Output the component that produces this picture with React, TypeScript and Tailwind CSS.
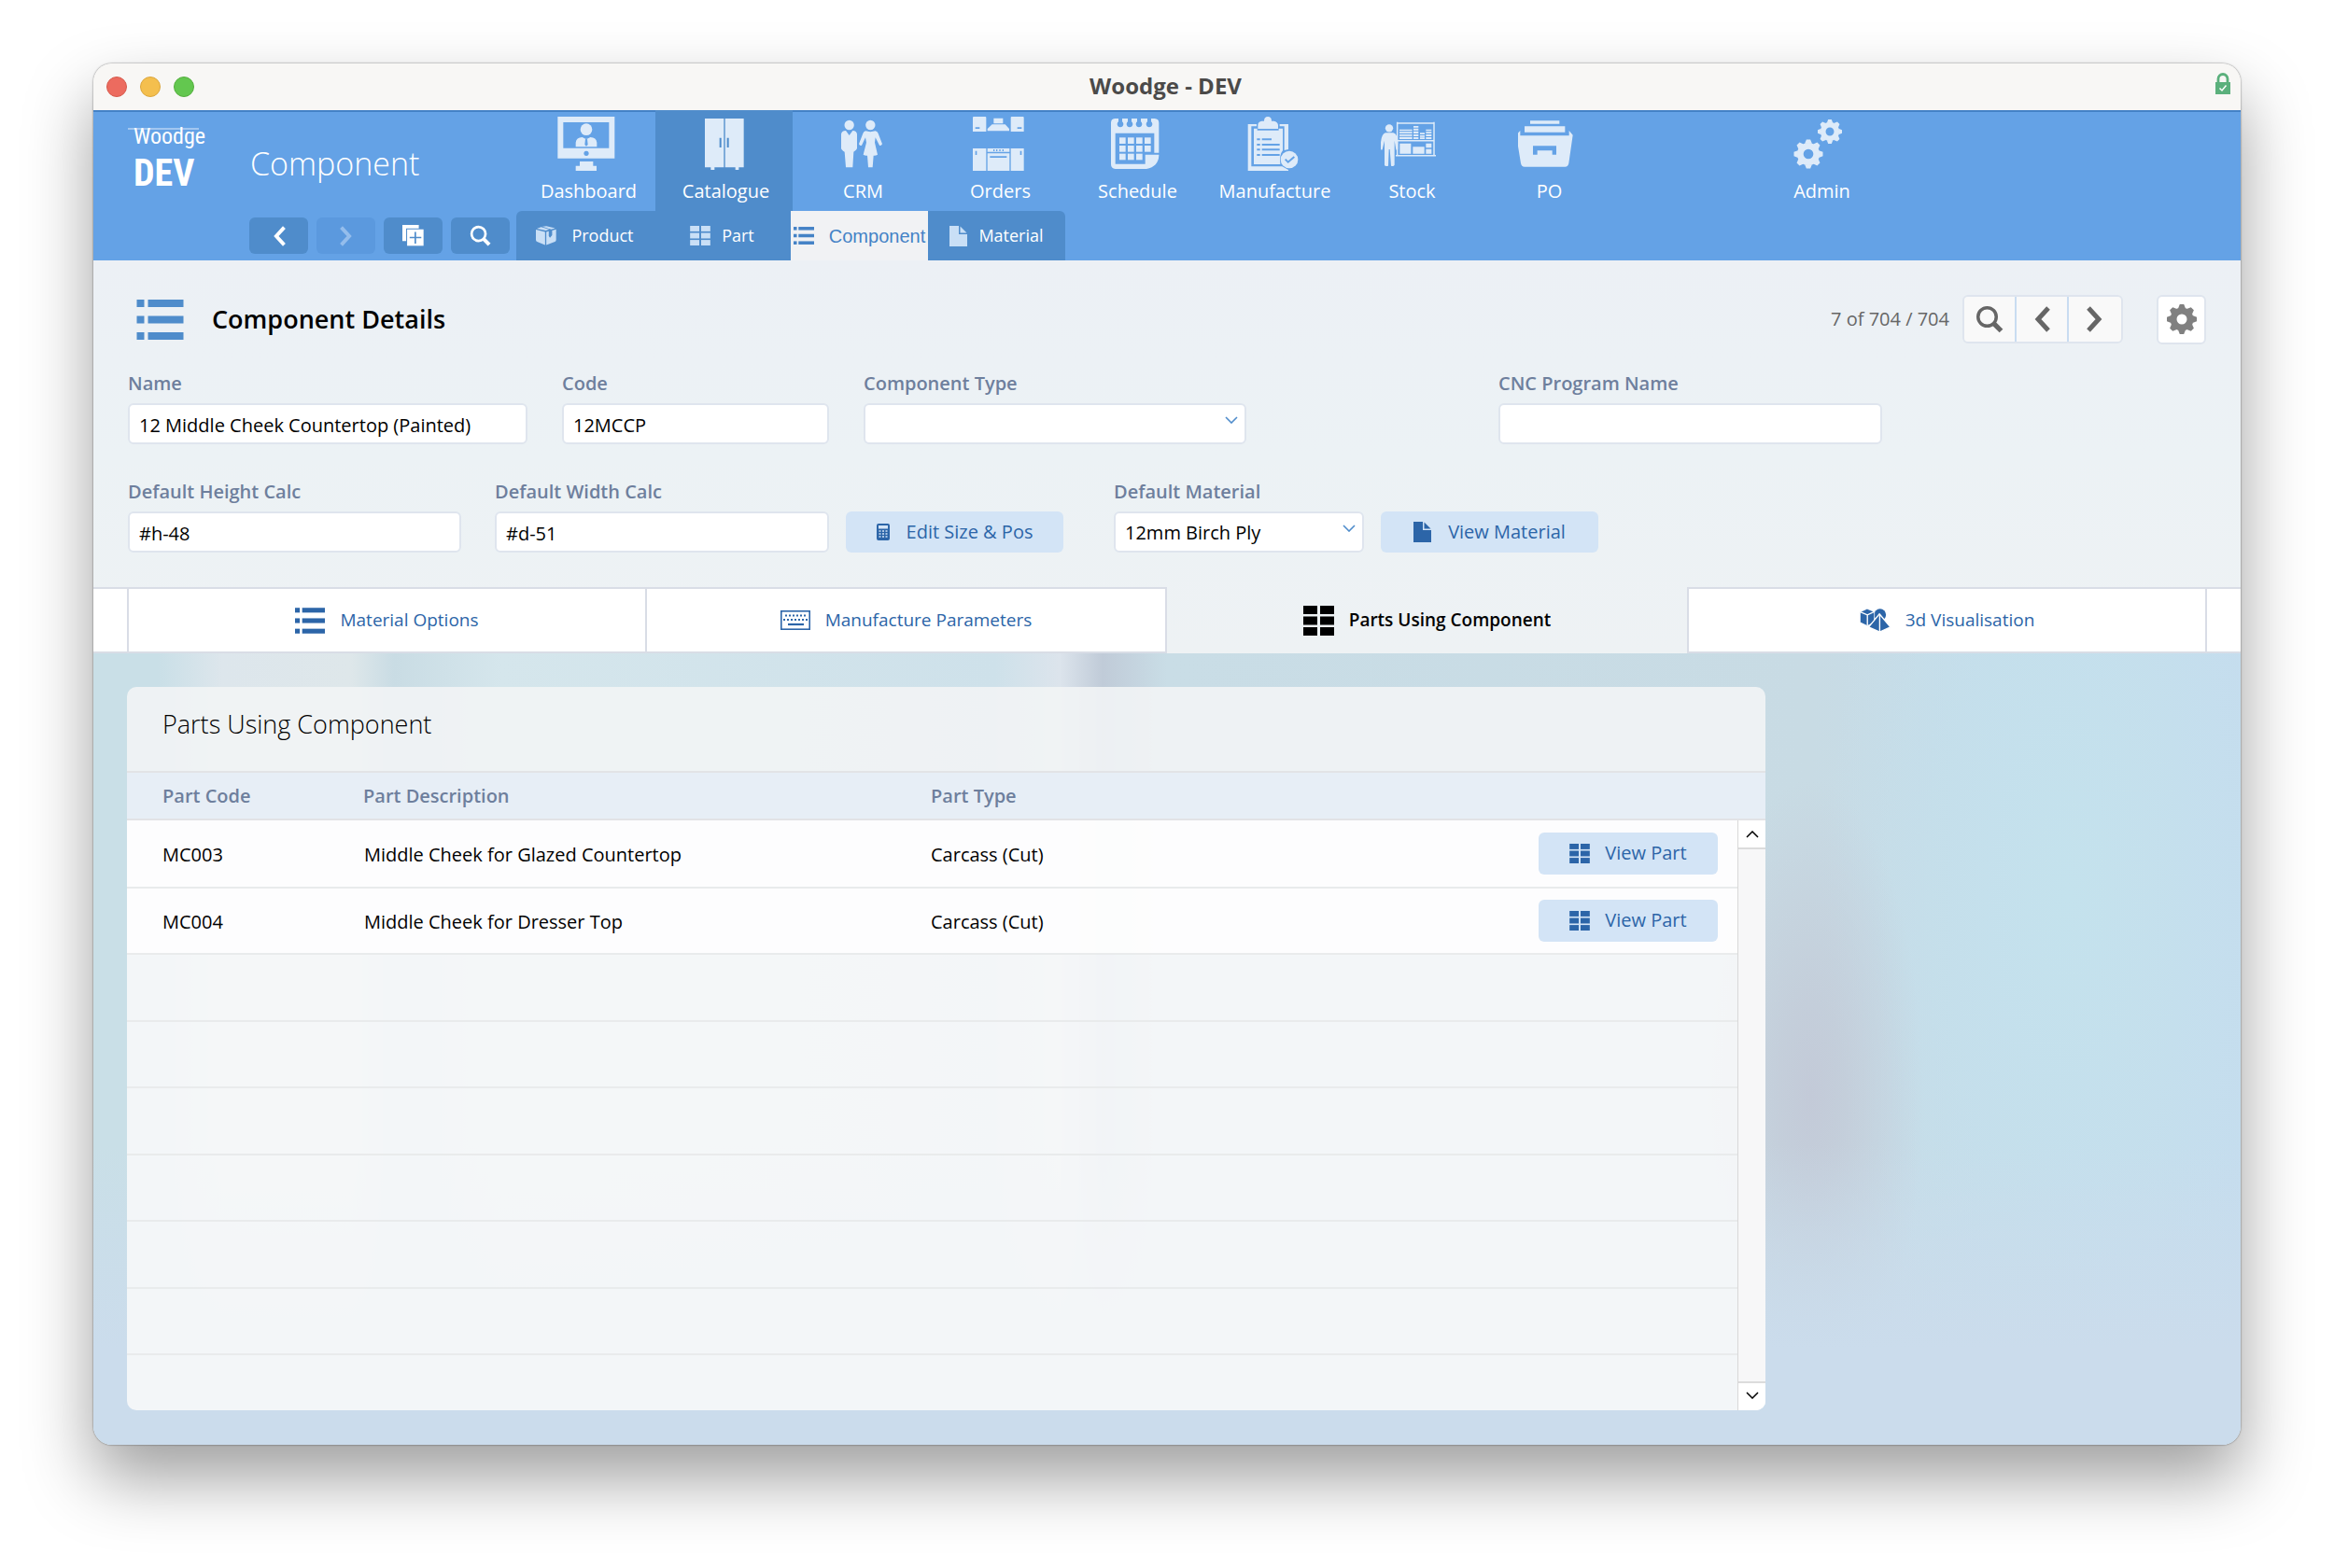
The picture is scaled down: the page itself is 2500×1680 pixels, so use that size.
import type { ReactNode } from "react";

interface IconProps {
  className?: string;
}

/* ---------- small icons ---------- */

function ListIcon({ className }: IconProps) {
  return (
    <svg viewBox="0 0 50 43" className={className} fill="currentColor" aria-hidden="true">
      {[0, 17.5, 35].map((y) => (
        <g key={y}>
          <rect x="0" y={y} width="8" height="8" />
          <rect x="12" y={y} width="38" height="8" />
        </g>
      ))}
    </svg>
  );
}

function GridIcon({ className }: IconProps) {
  return (
    <svg viewBox="0 0 33 32" className={className} fill="currentColor" aria-hidden="true">
      {[0, 11.5, 23].map((y) => (
        <g key={y}>
          <rect x="0" y={y} width="15" height="9" />
          <rect x="18" y={y} width="15" height="9" />
        </g>
      ))}
    </svg>
  );
}

function PageIcon({ className }: IconProps) {
  return (
    <svg viewBox="0 0 19 22" className={className} fill="currentColor" aria-hidden="true">
      <path d="M0 0H10V9H19V22H0Z" />
      <path d="M11.500 0.500L18.500 7.500H11.500Z" />
    </svg>
  );
}

function BoxIcon({ className }: IconProps) {
  return (
    <svg viewBox="69 395 67 63" className={className} fill="currentColor" aria-hidden="true">
      <path d="M69 407L99 414V457L73 446Q69 444 69 440Z" />
      <path d="M103 414L111 412V428L115 433L122 425V410L135 406V440Q135 444 131 446L103 457Z" />
      <path d="M72 404L86 398L113 406L101 410Z" />
      <path d="M90 397L103 395L132 402L119 406Z" />
    </svg>
  );
}

function SearchIcon({ className }: IconProps) {
  return (
    <svg viewBox="0 0 24 24" className={className} fill="none" stroke="currentColor" aria-hidden="true">
      <circle cx="10" cy="10" r="7.800" strokeWidth="2.800" />
      <path d="M15.500 15.500L22 22" strokeWidth="4.200" />
    </svg>
  );
}

function ChevronIcon({ className, right = false }: IconProps & { right?: boolean }) {
  return (
    <svg viewBox="0 0 18 28" className={className} fill="none" stroke="currentColor" strokeWidth="5" aria-hidden="true">
      <path d={right ? "M2 2L13 14L2 26" : "M16 2L5 14L16 26"} />
    </svg>
  );
}

function DuplicateIcon({ className }: IconProps) {
  return (
    <svg viewBox="1023 545 68 68" className={className} aria-hidden="true">
      <path d="M1023 545H1075V556H1035V596H1023Z" fill="#fff" />
      <rect x="1038" y="559" width="52" height="52" fill="#fff" />
      <path d="M1064 567V604M1046 585H1083" stroke="#4f8ccb" strokeWidth="5" />
    </svg>
  );
}

function CalculatorIcon({ className }: IconProps) {
  return (
    <svg viewBox="0 0 14 18" className={className} aria-hidden="true">
      <rect width="14" height="18" rx="2" fill="#2c65a8" />
      <rect x="2" y="2" width="10" height="3.500" fill="#d3e4f6" />
      {[7.5, 10.5, 13.5].map((y) => (
        <path key={y} d={`M2.500 ${y + 0.5}h2M6 ${y + 0.5}h2M9.500 ${y + 0.5}h2`} stroke="#d3e4f6" strokeWidth="1.600" />
      ))}
    </svg>
  );
}

function KeyboardIcon({ className }: IconProps) {
  return (
    <svg viewBox="0 0 32 21" className={className} fill="none" stroke="currentColor" aria-hidden="true">
      <rect x="0.800" y="0.800" width="30.400" height="19.400" strokeWidth="1.600" />
      <path d="M5 5.500H28" strokeWidth="2" strokeDasharray="2 2" />
      <path d="M3 10H30" strokeWidth="2" strokeDasharray="2 2" />
      <path d="M8 15H25" strokeWidth="2.200" />
    </svg>
  );
}

/* cube and sphere with a pyramid in front */
function ShapesIcon({ className }: IconProps) {
  return (
    <svg viewBox="35 37 97 74" className={className} aria-hidden="true">
      <circle cx="99" cy="57" r="19" fill="#2c65a8" />
      <path d="M58 38L81 47V80L59 92L36 81V48Z" fill="#2c65a8" stroke="#fff" strokeWidth="2" />
      <path d="M36 48L59 57L81 47M59 57V92" stroke="#fff" strokeWidth="4" fill="none" />
      <path d="M97 54L132 96L98 111L63 96Z" fill="#2c65a8" stroke="#fff" strokeWidth="4" />
      <path d="M98 55V111" stroke="#fff" strokeWidth="4" />
    </svg>
  );
}

function Gear({ cx, cy, r }: { cx: number; cy: number; r: number }) {
  return (
    <g transform={`translate(${cx} ${cy}) scale(${r / 16})`}>
      <circle r="9" fill="none" stroke="currentColor" strokeWidth="7" />
      {[0, 45, 90, 135, 180, 225, 270, 315].map((a) => (
        <path key={a} d="M-4 -11.500L-2.200 -16H2.200L4 -11.500Z" fill="currentColor" transform={`rotate(${a})`} />
      ))}
    </g>
  );
}

function LockIcon({ className }: IconProps) {
  return (
    <svg viewBox="0 0 16 23" className={className} fill="none" aria-hidden="true">
      <path d="M3 11V6.500A5 5 0 0 1 13 6.500V11" stroke="#5bb07c" strokeWidth="2.800" />
      <rect y="10" width="16" height="13" fill="#5bb07c" />
      <path d="M4.500 16.500L7 19L11.500 13.500" stroke="#fff" strokeWidth="1.500" />
    </svg>
  );
}

/* ---------- main navigation icons ---------- */

const dashboardIcon = (
  <svg viewBox="140 42 192 180" className="h-[60px] w-16" fill="currentColor" aria-hidden="true">
    <path fillRule="evenodd" d="M141 45H324V179H141ZM159 63V146H306V63ZM233 155a8 8 0 1 0 .1 0Z" />
    <circle cx="233" cy="86" r="19" />
    <path fillRule="evenodd" d="M199 142V128Q201 112 220 111L233 118L246 111Q265 112 267 128V142ZM230 116L228 135L233 140L238 135L236 116Z" />
    <path d="M212 189H255V203H266V219H199V203H212Z" />
  </svg>
);

const catalogueIcon = (
  <svg viewBox="580 42 192 180" className="h-[60px] w-16" fill="currentColor" aria-hidden="true">
    <path fillRule="evenodd" d="M613 51H674V208H613ZM660 113V144H666V113Z" />
    <path fillRule="evenodd" d="M678 51H738V208H678ZM684 113V144H690V113Z" />
    <path d="M632 206H644V216H632ZM711 206H722V216H711Z" />
  </svg>
);

const crmIcon = (
  <svg viewBox="1021 42 192 180" className="h-[60px] w-16" fill="currentColor" aria-hidden="true">
    <circle cx="1077" cy="72" r="15.500" />
    <path d="M1051 101Q1052 91 1066 90L1077 105L1088 90Q1101 91 1102 101V146Q1102 150 1091 158L1088 208H1066L1062 158Q1051 151 1051 146Z" />
    <circle cx="1145" cy="72" r="15.500" />
    <path d="M1129 91Q1145 96 1161 91Q1168 93 1170 99L1183 133Q1179 140 1174 137L1161 112L1159 128L1168 167Q1162 171 1155 170L1152 208H1138L1135 170Q1128 171 1122 167L1132 128L1129 112L1117 137Q1111 140 1108 133L1121 99Q1123 93 1129 91Z" />
  </svg>
);

const ordersIcon = (
  <svg viewBox="172 42 192 180" className="h-[60px] w-16" fill="currentColor" aria-hidden="true">
    <path fillRule="evenodd" d="M187 45H224Q227 45 227 48V93H184V48Q184 45 187 45ZM192 79V84H206V79Z" />
    <path fillRule="evenodd" d="M309 45H345Q348 45 348 48V93H306V48Q306 45 309 45ZM327 79V84H341V79Z" />
    <path d="M251 50H281V67H251ZM246 70H288L301 84V91H231V84Z" />
    <path fillRule="evenodd" d="M184 147H227V219H184ZM192 155V168H197V155Z" />
    <path fillRule="evenodd" d="M306 147H348V219H306ZM336 155V168H341V155Z" />
    <path fillRule="evenodd" d="M231 147H302V158H231ZM250 150V156H254V150ZM259 150V156H263V150ZM269 150V156H273V150ZM279 150V156H283V150Z" />
    <path fillRule="evenodd" d="M231 163H302V219H231ZM239 172V177H293V172Z" />
  </svg>
);

const scheduleIcon = (
  <svg viewBox="613 42 192 180" className="h-[60px] w-16" fill="currentColor" aria-hidden="true">
    <path
      fillRule="evenodd"
      d="M640 51H652V61A10 10 0 1 0 664 61V51H682V61A10 10 0 1 0 694 61V51H712V61A10 10 0 1 0 724 61V51H745V61A10 10 0 1 0 757 61V51H768Q782 52 782 65V170Q780 205 742 213H642Q628 212 628 198V65Q628 52 640 51ZM642 98V197H738V167H767V98ZM767 161H782V167H767Z"
    />
    {[112, 138, 164].map((y, row) =>
      [655, 682, 709, 736].slice(0, row === 2 ? 3 : 4).map((x) => <rect key={`${x}-${y}`} x={x} y={y} width="20" height="20" />)
    )}
  </svg>
);

const manufactureIcon = (
  <svg viewBox="154 192 192 180" className="h-[60px] w-16" fill="currentColor" aria-hidden="true">
    <path d="M168 219H196V226H179V355H278L298 366V369H168ZM270 219H298V300L285 303V226H270Z" />
    <path fillRule="evenodd" d="M187 233H198V239H267V233H280V304Q268 318 272 348H187ZM197 265V271H207V265ZM213 265V271H244V265ZM197 282V288H207V282ZM213 282V288H270V282ZM197 298V304H207V298ZM213 298V304H270V298ZM197 315V321H207V315ZM213 315V321H270V315Z" />
    <path d="M200 234V222Q201 210 213 209H220Q220 195 232 195Q244 195 244 209H251Q264 211 265 222V234Z" />
    <circle cx="301" cy="333" r="28" />
    <path d="M288 332L297 341L317 324" fill="none" stroke="#64a2e6" strokeWidth="6" />
  </svg>
);

const stockIcon = (
  <svg viewBox="597 192 192 180" className="h-[60px] w-16" fill="currentColor" aria-hidden="true">
    <circle cx="624" cy="232" r="12.500" />
    <path d="M612 247H637Q651 250 652 280V299Q650 305 646 301L641 272V350Q639 356 630 353L626 300H623L621 353Q610 356 609 350V272L602 301Q597 304 596 296Q596 252 612 247Z" />
    <path d="M650 212V318M768 212V320M648 216H770M652 272H768M645 320H774" fill="none" stroke="currentColor" strokeWidth="4.500" />
    <path d="M657 236H698V241H657ZM657 244H698V249H657ZM657 252H698V257H657ZM657 260H698V267H657ZM702 225H718V230H702ZM702 233H718V239H702ZM702 242H718V249H702ZM702 252H718V258H702ZM702 261H718V267H702ZM723 247H738V252H723ZM723 255H738V260H723ZM723 262H738V267H723ZM742 236H760V241H742ZM742 244H760V249H742ZM742 252H760V258H742ZM742 261H760V267H742Z" />
    <path d="M658 281H694V314H658ZM700 292H737V314H700ZM742 281H760V295H742ZM742 299H760V314H742Z" />
  </svg>
);

const poIcon = (
  <svg viewBox="1039 192 192 180" className="h-[60px] w-16" fill="currentColor" aria-hidden="true">
    <path d="M1078 208H1172V218H1078ZM1060 226H1190V245H1060Z" />
    <path fillRule="evenodd" d="M1046 240V256H1203V240L1215 254L1202 345Q1200 356 1190 356H1060Q1050 356 1048 345L1033 254ZM1087 289V317H1101V304H1149V317H1162V289Z" />
  </svg>
);

const adminIcon = (
  <svg viewBox="1919 124 64 60" className="h-[60px] w-16" aria-hidden="true">
    <Gear cx={1938} cy={165} r={15.5} />
    <Gear cx={1961} cy={141} r={13} />
  </svg>
);

/* ---------- data ---------- */

const navItems: { name: string; icon: ReactNode; active?: boolean }[] = [
  { name: "Dashboard", icon: dashboardIcon },
  { name: "Catalogue", icon: catalogueIcon, active: true },
  { name: "CRM", icon: crmIcon },
  { name: "Orders", icon: ordersIcon },
  { name: "Schedule", icon: scheduleIcon },
  { name: "Manufacture", icon: manufactureIcon },
  { name: "Stock", icon: stockIcon },
  { name: "PO", icon: poIcon },
];

const parts = [
  { code: "MC003", description: "Middle Cheek for Glazed Countertop", type: "Carcass (Cut)" },
  { code: "MC004", description: "Middle Cheek for Dresser Top", type: "Carcass (Cut)" },
];

const emptyRows = [1, 2, 3, 4, 5, 6, 7];

/* ---------- pieces ---------- */

function NavItem({ name, icon, active = false }: { name: string; icon: ReactNode; active?: boolean }) {
  return (
    <a
      href="#"
      className={`flex w-[147px] shrink-0 flex-col items-center pt-1.5 text-[#deebf9] ${active ? "bg-[#4f8ccb]" : ""}`}
    >
      {icon}
      <span className="mt-[7px] pl-1 text-[20px] leading-7 text-white">{name}</span>
    </a>
  );
}

function TitleBar() {
  return (
    <div className="flex h-[50px] items-center bg-[#f8f7f5] pr-[11px] pl-[14px]">
      <div className="flex flex-1 gap-[14px]">
        <button aria-label="Close" className="size-[22px] rounded-full border border-[#d65a4c] bg-[#ec6b5f]" />
        <button aria-label="Minimise" className="size-[22px] rounded-full border border-[#dba63c] bg-[#f4bf4e]" />
        <button aria-label="Zoom" className="size-[22px] rounded-full border border-[#54ae3e] bg-[#63c74f]" />
      </div>
      <h1 className="mr-1.5 pb-0.5 text-[24px] leading-8 font-bold text-[#4b4a49]">Woodge - DEV</h1>
      <div className="flex flex-1 justify-end pb-2">
        <LockIcon className="h-[23px] w-4" />
      </div>
    </div>
  );
}

function Header() {
  const toolButton = "flex h-[39px] w-[63px] items-center justify-center rounded-md bg-[#4f8ccb] text-white";
  const subTab = "flex w-[147px] items-center justify-center text-[18px] text-white";
  return (
    <header className="bg-[#64a2e6] shadow-[inset_0_2px_0_#4482c6]">
      <div className="flex h-[108px]">
        <div className="relative flex w-[168px] shrink-0 flex-col pt-[12px] pl-[43px] font-['Roboto_Condensed','Liberation_Sans_Narrow','Roboto',sans-serif] text-white">
          <span className="absolute top-[19px] left-[37px] h-[2px] w-[76px] bg-white/40" />
          <span className="relative text-[24px] leading-8">Woodge</span>
          <span className="pt-1 text-[40px] leading-10 font-bold">DEV</span>
        </div>
        <h2 className="w-[287px] shrink-0 pt-[33px] text-[34px] leading-[48px] font-light text-white">Component</h2>
        <nav className="flex">
          {navItems.map((item) => (
            <NavItem key={item.name} {...item} />
          ))}
          <div className="w-[145px]" />
          <NavItem name="Admin" icon={adminIcon} />
        </nav>
      </div>
      <div className="flex h-[53px] pl-[167px]">
        <div className="flex gap-[9px] pt-[7px]">
          <button className={toolButton} aria-label="Back">
            <ChevronIcon className="h-[22px] w-[14px]" />
          </button>
          <button className="flex h-[39px] w-[63px] items-center justify-center rounded-md bg-[#5b99de] text-[#94bdec]" aria-label="Forward" disabled>
            <ChevronIcon className="h-[22px] w-[14px]" right />
          </button>
          <button className={toolButton} aria-label="Duplicate">
            <DuplicateIcon className="size-[23px]" />
          </button>
          <button className={toolButton} aria-label="Search">
            <SearchIcon className="size-[23px]" />
          </button>
        </div>
        <nav className="ml-[7px] flex">
          <a href="#" className={`${subTab} gap-4 rounded-tl-md bg-[#4f8ccb]`}>
            <BoxIcon className="h-[21px] w-[22px] text-[#c9dff6]" />
            Product
          </a>
          <a href="#" className={`${subTab} gap-3 bg-[#4f8ccb]`}>
            <GridIcon className="h-[21px] w-[22px] text-[#c9dff6]" />
            Part
          </a>
          <a href="#" className="flex w-[147px] items-center justify-center gap-4 bg-[#f1f2f4] font-['Liberation_Sans',sans-serif] text-[20px] text-[#4482c6]">
            <ListIcon className="h-[19px] w-[22px]" />
            Component
          </a>
          <a href="#" className={`${subTab} gap-3 rounded-tr-md bg-[#4f8ccb]`}>
            <PageIcon className="h-[22px] w-[19px] text-[#c9dff6]" />
            Material
          </a>
        </nav>
      </div>
    </header>
  );
}

function Field({ id, label, value = "", className }: { id: string; label: string; value?: string; className: string }) {
  return (
    <div className={className}>
      <label htmlFor={id} className="block text-[20px] leading-8 font-semibold text-[#6e7f9d]">
        {label}
      </label>
      <input
        id={id}
        defaultValue={value}
        className="mt-[5px] block h-11 w-full rounded-md border-2 border-[#dfe5ee] bg-white px-2.5 pt-0.5 text-[20px] text-black"
      />
    </div>
  );
}

function SelectField({ id, label, value = "", className }: { id: string; label: string; value?: string; className: string }) {
  return (
    <div className={className}>
      <label htmlFor={id} className="block text-[20px] leading-8 font-semibold text-[#6e7f9d]">
        {label}
      </label>
      <div className="relative mt-[5px]">
        <select
          id={id}
          defaultValue={value}
          className="block h-11 w-full appearance-none rounded-md border-2 border-[#dfe5ee] bg-white px-2.5 pt-0.5 text-[20px] text-black"
        >
          <option value={value}>{value}</option>
        </select>
        <svg viewBox="0 0 14 8" className="pointer-events-none absolute top-[14px] right-[9px] h-2 w-[14px]" fill="none" stroke="#4f8ccb" strokeWidth="1.600" aria-hidden="true">
          <path d="M1 1L7 7L13 1" />
        </svg>
      </div>
    </div>
  );
}

function Details() {
  const pager = "flex w-14 items-center justify-center bg-[#f9f9f9] text-[#666]";
  const action = "flex h-11 w-[233px] shrink-0 items-center justify-center gap-[18px] rounded-md bg-[#d3e4f6] text-[20px] text-[#2c65a8]";
  return (
    <section className="h-[350px] px-[37px] pt-[37px]">
      <div className="flex h-[52px] items-center">
        <ListIcon className="ml-[9px] h-[43px] w-[51px] text-[#4f8ccb]" />
        <h3 className="ml-[30px] text-[27px] font-semibold text-black">Component Details</h3>
        <span className="ml-auto text-[20px] text-[#666]">7 of 704 / 704</span>
        <div className="ml-[14px] flex h-[52px] divide-x-2 divide-[#c9dcf1] overflow-hidden rounded-md border-2 border-[#dfe5ee]">
          <button className={pager} aria-label="Find">
            <SearchIcon className="size-[30px]" />
          </button>
          <button className={pager} aria-label="Previous record">
            <ChevronIcon className="h-7 w-[18px]" />
          </button>
          <button className={pager} aria-label="Next record">
            <ChevronIcon className="h-7 w-[18px]" right />
          </button>
        </div>
        <button className="ml-[36px] flex size-[53px] items-center justify-center rounded-md border-2 border-[#dfe5ee] bg-white text-[#808080]" aria-label="Settings">
          <svg viewBox="-16 -16 32 32" className="size-8" aria-hidden="true">
            <Gear cx={0} cy={0} r={16} />
          </svg>
        </button>
      </div>

      <div className="mt-[27px] flex gap-[37px]">
        <Field id="name" label="Name" value="12 Middle Cheek Countertop (Painted)" className="w-[428px]" />
        <Field id="code" label="Code" value="12MCCP" className="w-[286px]" />
        <SelectField id="type" label="Component Type" className="mr-[233px] w-[410px]" />
        <Field id="cnc" label="CNC Program Name" className="w-[411px]" />
      </div>

      <div className="mt-[35px] flex items-end">
        <Field id="height" label="Default Height Calc" value="#h-48" className="mr-9 w-[357px]" />
        <Field id="width" label="Default Width Calc" value="#d-51" className="mr-[18px] w-[358px]" />
        <button className={`${action} mr-[54px]`}>
          <CalculatorIcon className="h-[18px] w-[14px]" />
          Edit Size &amp; Pos
        </button>
        <SelectField id="material" label="Default Material" value="12mm Birch Ply" className="mr-[18px] w-[268px]" />
        <button className={action}>
          <PageIcon className="h-[22px] w-[19px]" />
          View Material
        </button>
      </div>
    </section>
  );
}

function Tabs() {
  const tab = "flex items-center justify-center gap-4 border-y-2 border-[#d9dde6] bg-white text-[19px] text-[#2c65a8]";
  return (
    <div className="flex h-[71px]">
      <div className="w-[36px] border-y-2 border-[#d9dde6] bg-white" />
      <div className="grid flex-1 grid-cols-4">
        <button className={`${tab} border-x-2`}>
          <ListIcon className="h-7 w-8" />
          Material Options
        </button>
        <button className={`${tab} border-r-2`}>
          <KeyboardIcon className="h-[21px] w-8" />
          Manufacture Parameters
        </button>
        <button className="flex items-center justify-center gap-4 text-[19px] font-semibold text-black">
          <GridIcon className="h-8 w-[33px]" />
          Parts Using Component
        </button>
        <button className={`${tab} border-x-2`}>
          <ShapesIcon className="h-[25px] w-[33px]" />
          3d Visualisation
        </button>
      </div>
      <div className="w-[36px] border-y-2 border-[#d9dde6] bg-white" />
    </div>
  );
}

function PartsPanel() {
  return (
    <section className="mt-9 mr-[509px] mb-[37px] ml-[36px] overflow-hidden rounded-[10px]">
      <h3 className="h-[90px] bg-[#f2f4f5]/90 pt-5 pl-[38px] text-[27px] leading-10 font-light text-black">Parts Using Component</h3>
      <div className="flex h-[53px] items-center border-y-2 border-[#e2e3e6] bg-[#e7eef6] pl-[38px] text-[20px] font-semibold text-[#6e7f9d]">
        <span className="w-[215px]">Part Code</span>
        <span className="w-[608px]">Part Description</span>
        <span>Part Type</span>
      </div>
      <div className="flex h-[632px] overflow-hidden bg-[#f7f8f9]/90">
        <div className="flex-1 overflow-hidden">
          <table className="h-[645px] w-full table-fixed border-collapse text-[20px] text-black">
            <colgroup>
              <col className="w-[254px]" />
              <col className="w-[607px]" />
              <col />
              <col className="w-[213px]" />
            </colgroup>
            <tbody>
              {parts.map((part) => (
                <tr key={part.code} className="h-[71px] border-b-2 border-[#e9ebec] bg-white/80">
                  <td className="pt-1 pl-[38px]">{part.code}</td>
                  <td className="pt-1">{part.description}</td>
                  <td className="pt-1">{part.type}</td>
                  <td>
                    <button className="flex h-[45px] w-[192px] items-center justify-center gap-4 rounded-md bg-[#d3e4f6] text-[20px] text-[#2c65a8]">
                      <GridIcon className="h-[21px] w-[22px]" />
                      View Part
                    </button>
                  </td>
                </tr>
              ))}
              {emptyRows.map((row) => (
                <tr key={row} className="h-[71px] border-b-2 border-[#e9ebec]">
                  <td colSpan={4} />
                </tr>
              ))}
            </tbody>
          </table>
        </div>
        <div className="flex w-[30px] flex-col justify-between border-l border-[#d8d8d8] bg-[#f7f7f8]">
          <button className="flex h-[31px] items-center justify-center border-b-2 border-[#dcdcdc] bg-white" aria-label="Scroll up">
            <svg viewBox="0 0 14 8" className="h-2 w-[14px]" fill="none" stroke="#000" strokeWidth="1.500" aria-hidden="true">
              <path d="M1 7L7 1L13 7" />
            </svg>
          </button>
          <button className="flex h-[31px] items-center justify-center border-t-2 border-[#dcdcdc] bg-white pb-1" aria-label="Scroll down">
            <svg viewBox="0 0 14 8" className="h-2 w-[14px]" fill="none" stroke="#000" strokeWidth="1.500" aria-hidden="true">
              <path d="M1 1L7 7L13 1" />
            </svg>
          </button>
        </div>
      </div>
    </section>
  );
}

export default function App() {
  return (
    <div className="min-h-screen bg-white px-[100px] pt-[68px] pb-[132px] font-['Open_Sans','Noto_Sans',sans-serif]">
      <main className="overflow-hidden rounded-[20px] shadow-[0_0_2px_rgba(0,0,0,0.6),0_36px_72px_rgba(0,0,0,0.38)]">
        <TitleBar />
        <Header />
        <div className="bg-[linear-gradient(180deg,#ecf0f5_0%,#ecf2f5_50%,#eef2f4_100%)]">
          <Details />
          <Tabs />
        </div>
        <div className="flow-root bg-[linear-gradient(0deg,#cbdcec_0%,#cbdcec_12%,transparent_38%),radial-gradient(ellipse_120px_340px_at_80%_56%,#c3cad8_0%,#c3cbd8cc_30%,transparent_100%),radial-gradient(ellipse_260px_620px_at_92%_30%,#c4e2ed_0%,transparent_100%),linear-gradient(90deg,#c9dfe7_0%,#c9dfe7_3%,#dde6ec_6%,#dee7ea_12%,#c9dce4_14%,#d5e6ec_19%,#cee1ea_42%,#dce4ec_45%,#c0cbd8_47%,#c9dde6_50%,#c8dbe4_80%,#c5dcea_88%,#c5dcee_100%)]">
          <PartsPanel />
        </div>
      </main>
    </div>
  );
}
